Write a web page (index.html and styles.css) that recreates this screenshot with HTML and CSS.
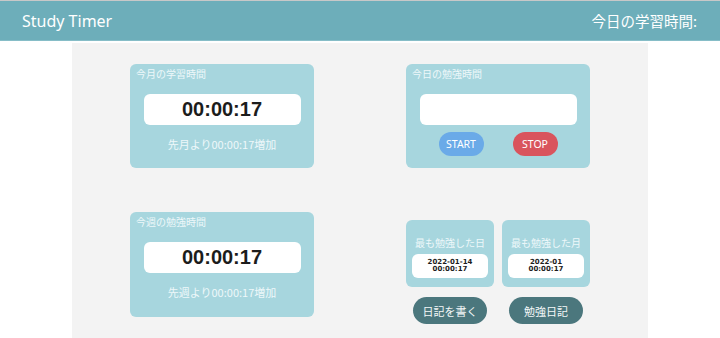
FILE: index.html
```html
<!DOCTYPE html>
<html lang="ja">
<head>
<meta charset="utf-8">
<title>Study Timer</title>
<link rel="stylesheet" href="styles.css">
</head>
<body>
<header class="header">
  <div class="brand">Study Timer</div>
  <div class="today">今日の学習時間:</div>
</header>
<main class="main">
  <section class="card">
    <div class="card-title">今月の学習時間</div>
    <div class="timebox">00:00:17</div>
    <div class="sub">先月より00:00:17増加</div>
  </section>
  <section class="card">
    <div class="card-title">今日の勉強時間</div>
    <div class="timebox"></div>
    <div class="controls">
      <button class="pill start">START</button>
      <button class="pill stop">STOP</button>
    </div>
  </section>
  <section class="card card-tall">
    <div class="card-title">今週の勉強時間</div>
    <div class="timebox">00:00:17</div>
    <div class="sub">先週より00:00:17増加</div>
  </section>
  <section class="records">
    <div class="record-col">
      <div class="mini">
        <div class="mini-title">最も勉強した日</div>
        <div class="mini-box">2022-01-14<br>00:00:17</div>
      </div>
      <button class="dark-btn">日記を書く</button>
    </div>
    <div class="record-col">
      <div class="mini">
        <div class="mini-title">最も勉強した月</div>
        <div class="mini-box">2022-01<br>00:00:17</div>
      </div>
      <button class="dark-btn">勉強日記</button>
    </div>
  </section>
</main>
</body>
</html>
```
FILE: styles.css
```css
* { box-sizing: border-box; }
html, body { margin: 0; padding: 0; background: #fff; }
body {
  font-family: "Noto Sans", "Noto Sans CJK JP", sans-serif;
  border-top: 1px solid #c8c8c8;
  height: 338px;
  overflow: hidden;
}
.header {
  height: 40px;
  background: #6daeba;
  border-bottom: 1px solid #86bdc7;
  display: flex;
  align-items: center;
  justify-content: space-between;
  padding: 0 23px 0 22px;
  color: #fff;
}
.brand { font-size: 16px; }
.today { font-family: "Noto Sans CJK JP", sans-serif; font-size: 14.5px; }
.main {
  margin: 2px 72px 0;
  height: 300px;
  background: #f3f3f3;
  padding: 21px 58px 0;
  display: grid;
  grid-template-columns: 184px 184px;
  grid-template-rows: 104px auto;
  justify-content: space-between;
  row-gap: 44px;
  align-items: start;
}
.card {
  background: #a7d6de;
  border-radius: 6px;
  height: 104px;
  display: flex;
  flex-direction: column;
}
.card-tall { height: 105px; }
.card-title {
  font-family: "Noto Sans CJK JP", sans-serif;
  font-size: 10px;
  line-height: 14px;
  color: #eef8fa;
  padding: 3px 0 0 6px;
}
.timebox {
  margin: 13px auto 0;
  width: 157px;
  height: 31px;
  background: #fff;
  border-radius: 6px;
  display: flex;
  align-items: center;
  justify-content: center;
  font-family: "Liberation Sans", Arial, sans-serif;
  font-weight: bold;
  font-size: 20px;
  color: #1c1c1c;
}
.sub {
  margin-top: 12px;
  text-align: center;
  font-family: "Noto Sans CJK JP", sans-serif;
  font-size: 11px;
  line-height: 15px;
  color: #eef8fa;
}
.controls {
  margin-top: 7px;
  display: flex;
  justify-content: center;
  gap: 29px;
}
.pill {
  width: 45px;
  height: 24px;
  border: none;
  border-radius: 12px;
  color: #fff;
  font-family: "Noto Sans", sans-serif;
  font-size: 10.5px;
  padding: 0;
}
.start { background: #6aaae8; }
.stop { background: #d9545d; }
.records {
  padding-top: 8px;
  display: grid;
  grid-template-columns: 88px 88px;
  column-gap: 8px;
}
.record-col {
  display: flex;
  flex-direction: column;
  align-items: center;
}
.mini {
  width: 88px;
  height: 67px;
  background: #a7d6de;
  border-radius: 6px;
  padding: 16px 6px 0;
}
.mini-title {
  font-family: "Noto Sans CJK JP", sans-serif;
  font-size: 10px;
  line-height: 14px;
  color: #eef8fa;
  text-align: center;
}
.mini-box {
  margin-top: 4px;
  height: 24px;
  background: #fff;
  border-radius: 6px;
  display: flex;
  flex-direction: column;
  align-items: center;
  justify-content: center;
  text-align: center;
  font-family: "DejaVu Sans", sans-serif;
  font-weight: bold;
  font-size: 7px;
  line-height: 7px;
  color: #1c1c1c;
}
.dark-btn {
  margin-top: 10px;
  width: 74px;
  height: 27px;
  border: none;
  border-radius: 14px;
  background: #4b777d;
  color: #f4f8f8;
  font-family: "Noto Sans CJK JP", sans-serif;
  font-size: 11px;
  padding: 0;
}
```
